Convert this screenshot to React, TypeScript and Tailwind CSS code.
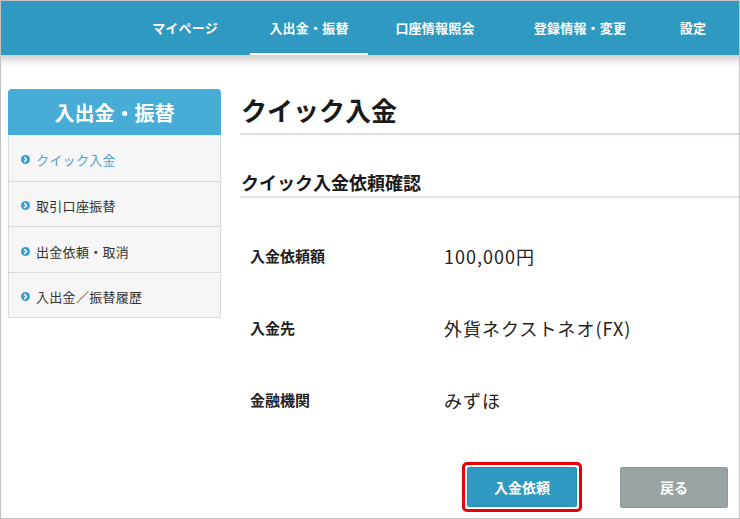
import React from "react";

const jp = { fontFamily: '"Noto Sans CJK JP", "Noto Sans", sans-serif' };

function Bullet() {
  return (
    <svg width="9" height="9" viewBox="0 0 10 10" className="shrink-0">
      <circle cx="5" cy="5" r="5" fill="#3a9fcf" />
      <path d="M4 2.8 L6.2 5 L4 7.2" stroke="#fff" strokeWidth="1.6" fill="none" strokeLinecap="round" strokeLinejoin="round" />
    </svg>
  );
}

const nav: [string, string][] = [
  ["マイページ", "w-[130px]"],
  ["入出金・振替", "w-[118px]"],
  ["口座情報照会", "w-[134px]"],
  ["登録情報・変更", "w-[156px]"],
  ["設定", "w-[70px]"],
];
const side = ["クイック入金", "取引口座振替", "出金依頼・取消", "入出金／振替履歴"];
const rows: [string, string][] = [
  ["入金依頼額", "100,000円"],
  ["入金先", "外貨ネクストネオ(FX)"],
  ["金融機関", "みずほ"],
];

export default function App() {
  return (
    <div style={jp} className="w-[740px] h-[519px] border border-[#c2c2c2] bg-white overflow-hidden flex flex-col text-[#222]">
      <header className="h-[54px] shrink-0 bg-[#2f99c1] flex items-stretch pl-[119px]">
        <nav className="flex items-stretch">
          {nav.map(([n, w], i) => (
            <div
              key={n}
              className={`${w} pt-[2px] flex items-center justify-center text-[13px] tracking-[0.2px] font-bold text-white border-b-2 ${i === 1 ? "border-white" : "border-transparent"}`}
            >
              {n}
            </div>
          ))}
        </nav>
      </header>
      <div className="h-[12px] shrink-0 bg-gradient-to-b from-[#cfcfcf] via-[#ececec] to-white" />
      <div className="flex flex-1 pt-[22px]">
        <aside className="ml-[7px] w-[213px] shrink-0 self-start">
          <div className="h-[46px] pt-[2px] rounded-t-[4px] bg-[#47acd6] flex items-center justify-center text-white text-[20px] font-bold">
            入出金・振替
          </div>
          <ul className="border border-t-0 border-[#d6dbde] bg-[#f6f6f6]">
            {side.map((s, i) => (
              <li
                key={s}
                className={`h-[45.5px] pt-[4px] flex items-center gap-[6px] pl-[12px] text-[13px] tracking-[0.3px] ${i > 0 ? "border-t border-[#d6dbde]" : ""} ${i === 0 ? "text-[#4b9fc9]" : "text-[#333]"}`}
              >
                <Bullet />
                <span>{s}</span>
              </li>
            ))}
          </ul>
        </aside>
        <main className="ml-[19px] flex-1 flex flex-col">
          <h1 className="mt-[4px] pb-[6px] pl-[1px] text-[26px] leading-[34px] font-bold text-[#1a1a1a] border-b-2 border-[#d6e0e4]">
            クイック入金
          </h1>
          <h2 className="mt-[35px] pb-[2px] pl-[1px] text-[18px] leading-[24px] font-bold text-[#1a1a1a] border-b-2 border-[#e1e5ea]">
            クイック入金依頼確認
          </h2>
          <div className="mt-[22px] flex flex-col">
            {rows.map(([l, v]) => (
              <div key={l} className="h-[72px] flex items-center">
                <div className="w-[204px] pl-[10px] text-[15px] font-bold text-[#222]">{l}</div>
                <div className="text-[18px] tracking-[1px] text-[#222]">{v}</div>
              </div>
            ))}
          </div>
          <div className="mt-[26px] flex items-start">
            <div className="ml-[222px] rounded-[5px] border-[3px] border-[#e8000b] p-[2px]">
              <button className="w-[110px] h-[40px] rounded-[2px] bg-[#2f99c1] border border-[#2b8db2] text-white text-[14px] font-bold">
                入金依頼
              </button>
            </div>
            <button className="ml-[38px] mt-[5px] w-[108px] h-[41px] rounded-[2px] bg-[#9aa3a3] border border-[#8f9898] text-white text-[14px] font-bold">
              戻る
            </button>
          </div>
        </main>
      </div>
    </div>
  );
}
